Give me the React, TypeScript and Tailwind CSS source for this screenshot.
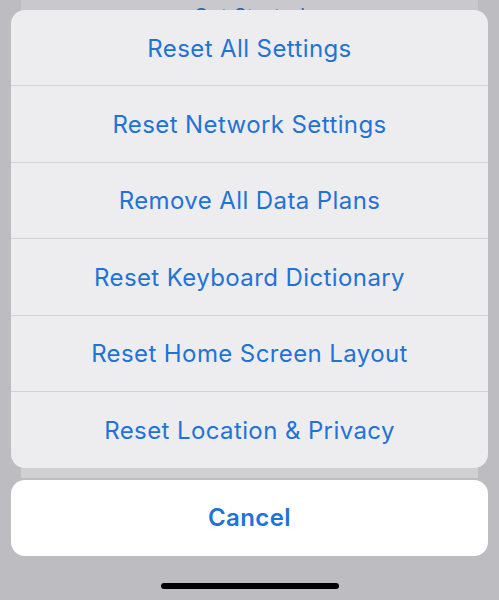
const actions = [
  'Reset All Settings',
  'Reset Network Settings',
  'Remove All Data Plans',
  'Reset Keyboard Dictionary',
  'Reset Home Screen Layout',
  'Reset Location & Privacy',
];

const font = { fontFamily: 'Inter, "Noto Sans", sans-serif' };

export default function App() {
  return (
    <div className="relative w-[499px] h-[600px] overflow-hidden bg-[#bdbdc1]" style={font}>
      {/* page underneath the sheet */}
      <div className="mx-[21px] h-[478px] bg-[#c9c9cd] flex flex-col">
        <div className="h-[36px] mt-[1px] flex justify-center text-[20px] tracking-[0.4px] text-[#2a66b8]">Get Started</div>
        <div className="flex-1" />
        <div className="h-[12px] bg-[#d0d0d3] border-t border-[#c2c2c6]" />
      </div>

      {/* action sheet */}
      <div className="absolute left-[11px] right-[11px] top-[10px] flex flex-col gap-[12px]">
        <div className="rounded-[14px] bg-[#ededf0] overflow-hidden flex flex-col">
          {actions.map((a, i) => (
            <div
              key={a}
              className={`h-[76.4px] pt-[2px] flex items-center justify-center text-[24px] text-[#1f73d6] tracking-[0.4px] ${
                i < actions.length - 1 ? 'border-b border-[#d3d3d7]' : ''
              }`}
            >
              {a}
            </div>
          ))}
        </div>
        <div className="h-[76px] rounded-[14px] bg-white flex items-center justify-center text-[24px] font-semibold tracking-[0.4px] text-[#1f73d6]">
          Cancel
        </div>
      </div>

      {/* home indicator */}
      <div className="absolute left-1/2 -translate-x-1/2 top-[583px] w-[178px] h-[6px] rounded-full bg-black" />
    </div>
  );
}
